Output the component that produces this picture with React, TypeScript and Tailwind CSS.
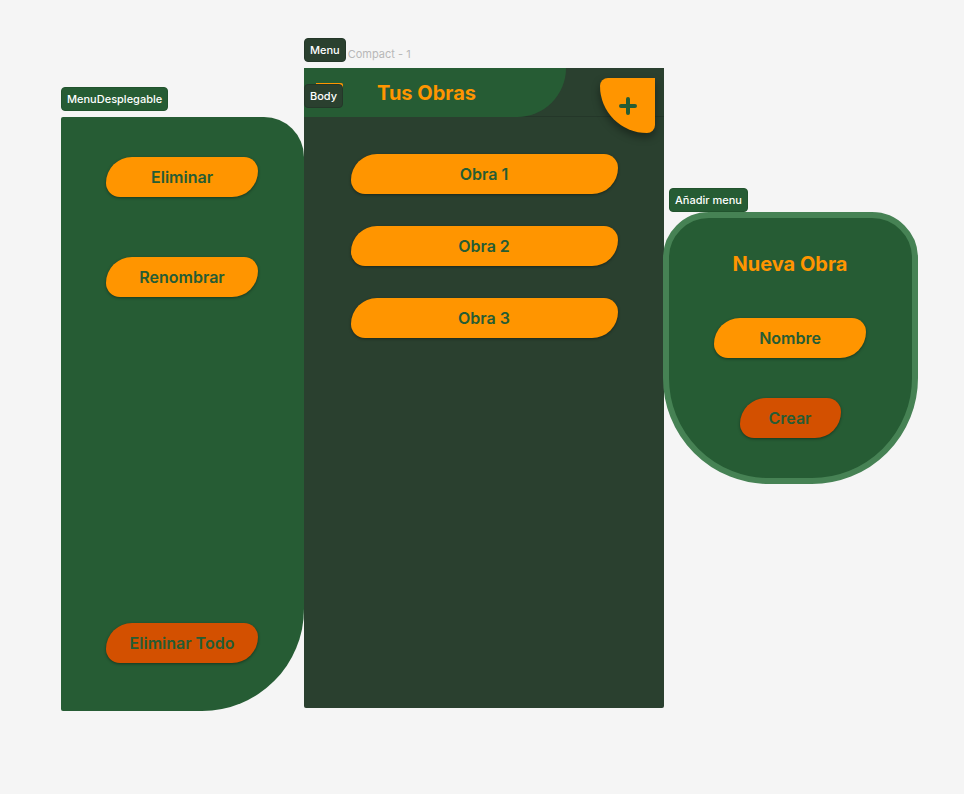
import type { ReactNode } from "react";
import clsx from "clsx";

const leaf =
  "h-10 rounded-tl-[26px] rounded-tr-[14px] rounded-br-[26px] rounded-bl-[14px] text-center text-base font-semibold text-[#265c34] shadow-[0_1px_3px_rgba(0,0,0,0.4)]";

function LeafButton({
  children,
  width,
  danger = false,
}: {
  children: ReactNode;
  width: string;
  danger?: boolean;
}) {
  return (
    <button type="button" className={clsx(leaf, width, danger ? "bg-[#d35000]" : "bg-[#ff9500]")}>
      {children}
    </button>
  );
}

function Tag({ children, dark = false }: { children: ReactNode; dark?: boolean }) {
  return (
    <span
      className={clsx(
        "flex h-6 w-fit items-center rounded border px-[5px] text-[11px] font-medium whitespace-nowrap text-white",
        dark ? "border-[#243729] bg-[#2a402f]" : "border-[#21532d] bg-[#265c34]",
      )}
    >
      {children}
    </span>
  );
}

function DropdownMenu() {
  return (
    <section className="w-[243px] shrink-0 pt-[87px]">
      <Tag>MenuDesplegable</Tag>
      <nav className="mt-1.5 flex h-[594px] flex-col items-start justify-between rounded-l-xs rounded-tr-[40px] rounded-br-[102px] bg-[#265c34] pt-10 pb-12 pl-[45px]">
        <div className="flex flex-col gap-[60px]">
          <LeafButton width="w-[152px]">Eliminar</LeafButton>
          <LeafButton width="w-[152px]">Renombrar</LeafButton>
        </div>
        <LeafButton width="w-[152px]" danger>
          Eliminar Todo
        </LeafButton>
      </nav>
    </section>
  );
}

function WorksScreen() {
  return (
    <section className="w-[360px] shrink-0 pt-[38px]">
      <div className="flex h-6 gap-[2px]">
        <Tag dark>Menu</Tag>
        <span className="pt-2 text-[11px] text-[#b8b8b8]">Compact - 1</span>
      </div>
      <main className="relative mt-1.5 h-[640px] rounded-b-xs bg-[#2a402f]">
        <header className="flex h-[49px] items-start justify-between border-b border-[#243729]">
          <div className="flex h-[49px] w-[262px] items-center rounded-br-[49px] bg-[#265c34] pl-[73px]">
            <h1 className="text-xl font-bold text-[#ff9500]">Tus Obras</h1>
          </div>
          <button
            type="button"
            aria-label="Añadir obra"
            className="mt-2.5 mr-[9px] flex size-[55px] shrink-0 items-center justify-center rounded-tl-lg rounded-br-lg rounded-bl-[47px] bg-[#ff9500] shadow-[0_4px_8px_rgba(0,0,0,0.4)]"
          >
            <svg viewBox="0 0 18 18" className="size-[18px]" stroke="#265c34" strokeWidth="4" strokeLinecap="round">
              <path d="M9 2v14M2 9h14" />
            </svg>
          </button>
        </header>
        <div className="absolute top-[15px] left-3 h-4 w-[27px] rounded-tr-xs bg-[#ff9500]" />
        <div className="absolute top-4 left-0">
          <Tag dark>Body</Tag>
        </div>
        <div className="flex flex-col items-center gap-8 pt-[37px]">
          <LeafButton width="w-[267px]">Obra 1</LeafButton>
          <LeafButton width="w-[267px]">Obra 2</LeafButton>
          <LeafButton width="w-[267px]">Obra 3</LeafButton>
        </div>
      </main>
    </section>
  );
}

function NewWorkForm() {
  return (
    <section className="z-10 -ml-px w-[255px] shrink-0 pt-[188px]">
      <div className="pl-1.5">
        <Tag>Añadir menu</Tag>
      </div>
      <form className="flex h-[272px] flex-col items-center rounded-t-[46px] rounded-b-[106px] border-6 border-[#468254] bg-[#265c34] pt-8 pr-px">
        <h2 className="text-xl font-bold text-[#ff9500]">Nueva Obra</h2>
        <input
          type="text"
          aria-label="Nombre"
          placeholder="Nombre"
          className={clsx(leaf, "mt-10 w-[152px] bg-[#ff9500] outline-none placeholder:text-[#265c34]")}
        />
        <div className="mt-10">
          <LeafButton width="w-[101px]" danger>
            Crear
          </LeafButton>
        </div>
      </form>
    </section>
  );
}

export default function App() {
  return (
    <div className="flex min-h-screen items-start bg-[#f5f5f5] pl-[61px] font-['Inter',sans-serif]">
      <DropdownMenu />
      <WorksScreen />
      <NewWorkForm />
    </div>
  );
}
